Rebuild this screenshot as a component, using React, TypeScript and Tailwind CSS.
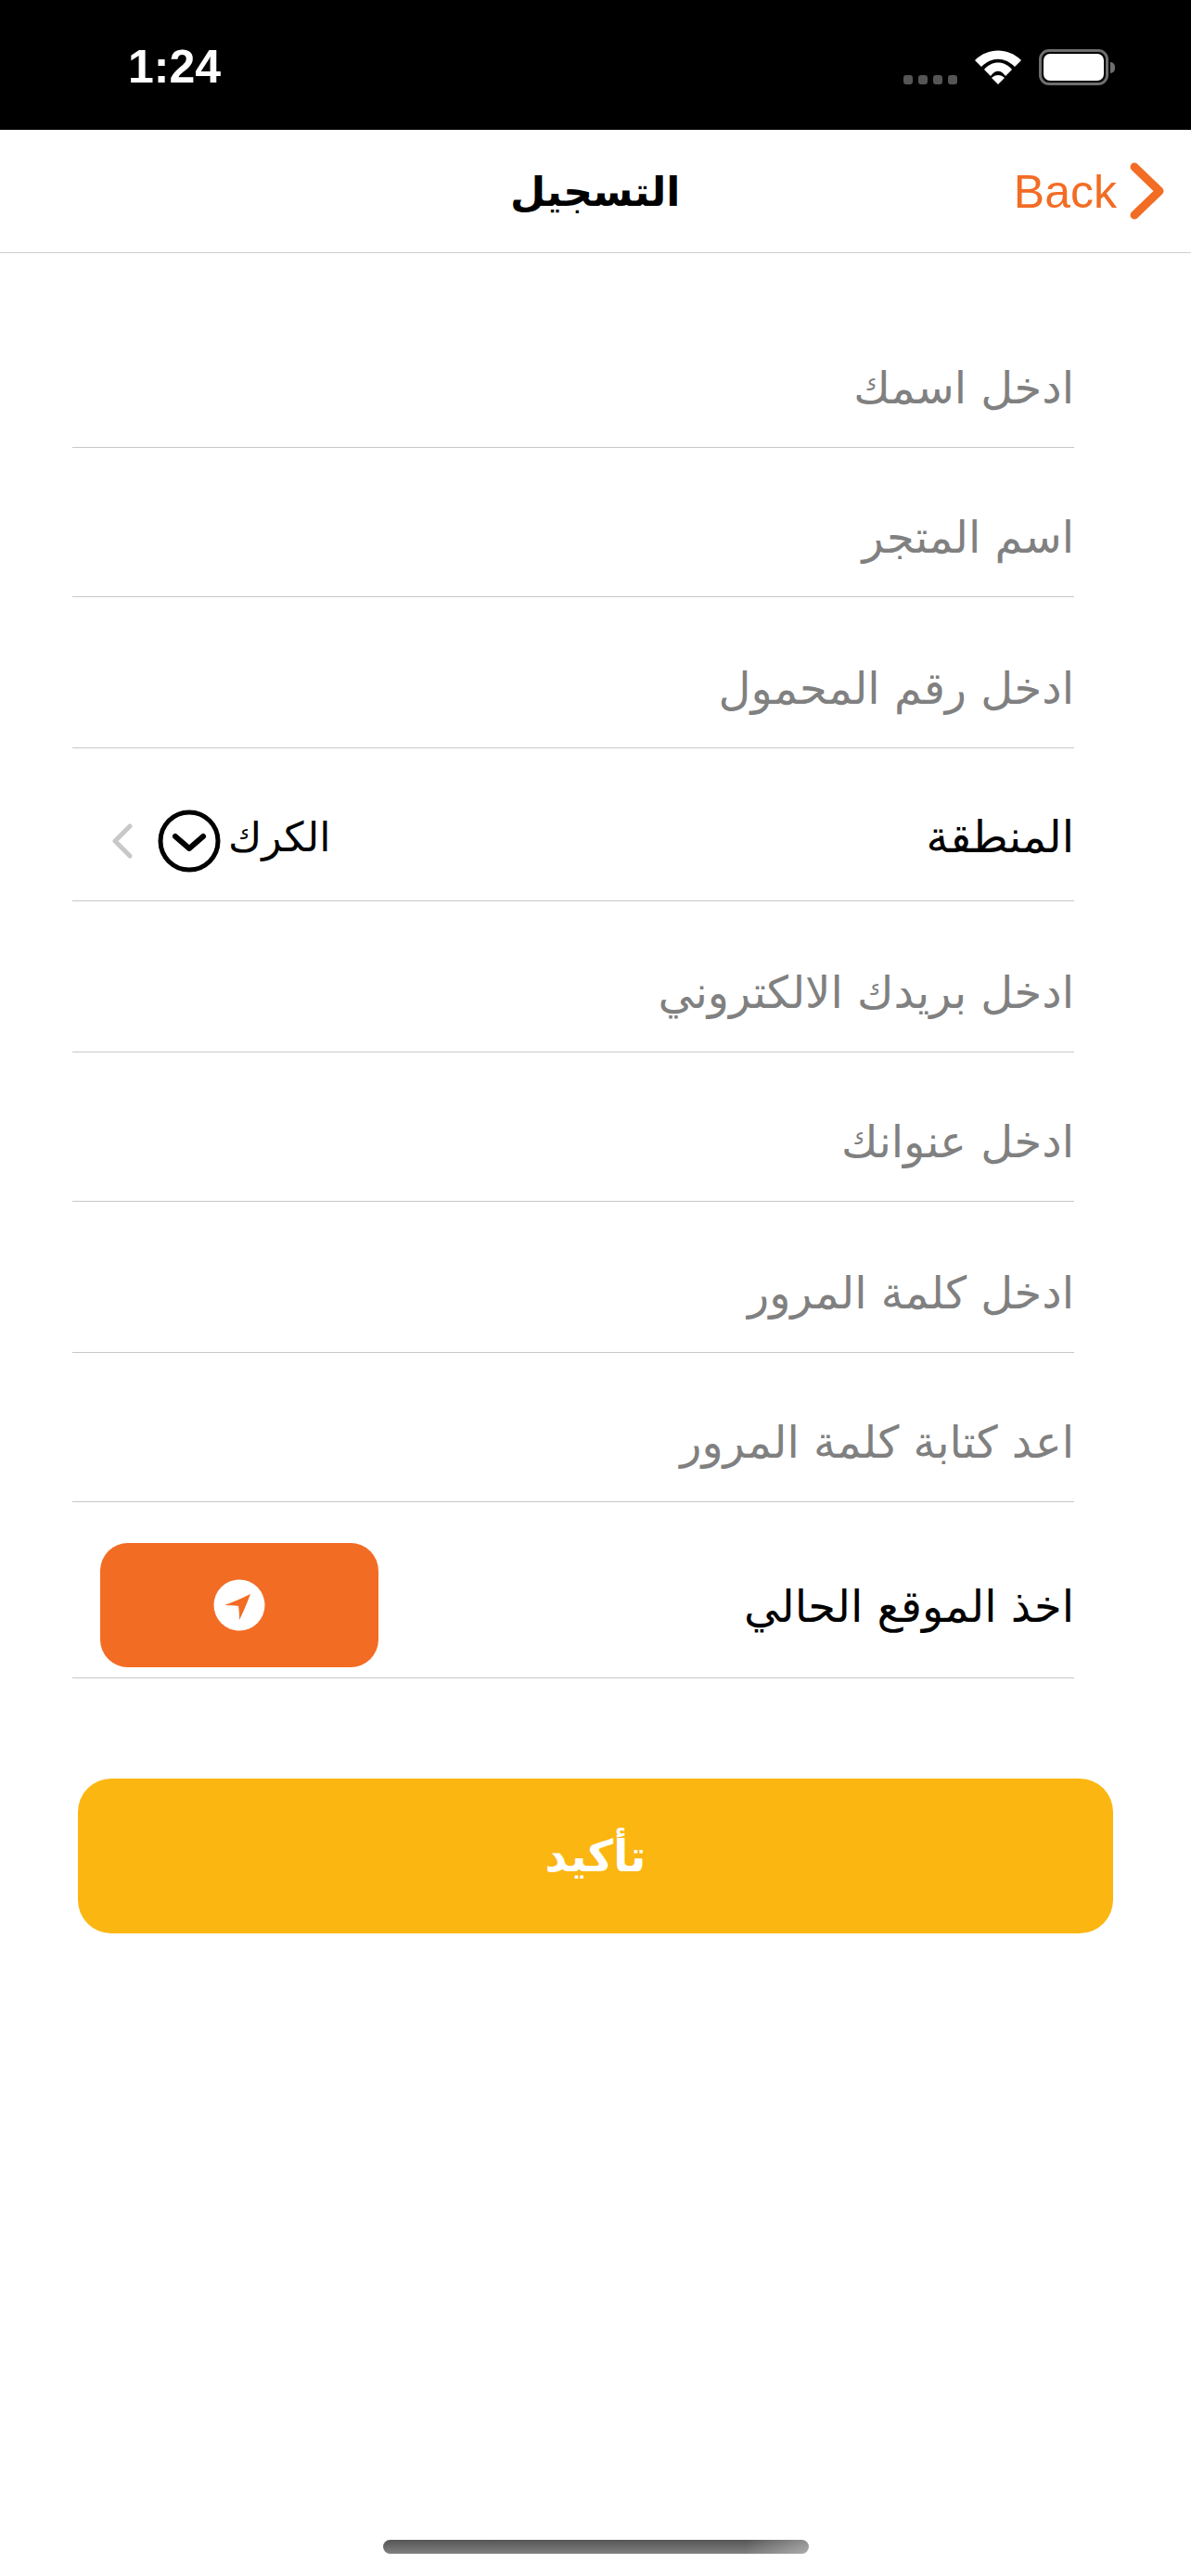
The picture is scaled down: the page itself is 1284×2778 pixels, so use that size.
export default function App() {
  const Row = ({ text, h }: { text: string; h: string }) => (
    <div className={`flex items-end justify-end border-b border-[#c8c8c8] pb-[28px] ${h}`}>
      <span dir="rtl" className="text-[48px] leading-[72px] text-[#808080]">{text}</span>
    </div>
  );
  return (
    <div className="flex h-[2778px] w-[1284px] flex-col overflow-hidden bg-white text-black [font-family:'DejaVu_Sans',sans-serif]">
      <div className="flex h-[140px] items-start justify-between bg-black pl-[138px] pr-[82px] pt-[43px]">
        <span className="text-[50px] font-bold leading-[58px] text-white [font-family:'Liberation_Sans',sans-serif]">1:24</span>
        <div className="flex items-start gap-[19px] pt-[10px]">
          <div className="flex gap-[6px] pt-[28px]">
            {[0, 1, 2, 3].map((i) => (
              <div key={i} className="h-[10px] w-[10px] rounded-[3px] bg-[#555]" />
            ))}
          </div>
          <svg className="mt-[1px]" width="50" height="37" viewBox="0 0 50 37" fill="white">
            <path d="M0 11 C14 -3 36 -3 50 11 L43 18 C32 7 18 7 7 18 Z" />
            <path d="M10 21 C18 11 32 11 40 21 L33 28 C28 21 22 21 17 28 Z" />
            <path d="M18 30 C22 26 28 26 32 30 L25 37 Z" />
          </svg>
          <div className="flex items-center">
            <div className="h-[39px] w-[75px] rounded-[11px] border-[3px] border-[#6e6e6e] p-[2px]">
              <div className="h-full w-full rounded-[7px] bg-white" />
            </div>
            <div className="ml-[2px] h-[12px] w-[5px] rounded-r-full bg-[#6e6e6e]" />
          </div>
        </div>
      </div>

      <div className="relative flex h-[133px] items-center justify-end border-b border-[#cfcfcf] pr-[28px]">
        <span dir="rtl" className="absolute left-[550px] top-[34px] text-[44px] font-bold leading-[66px]">التسجيل</span>
        <span className="mr-[14px] mt-[2px] text-[50px] leading-[56px] text-[#f26c24] [font-family:'Liberation_Sans',sans-serif]">Back</span>
        <svg width="38" height="62" viewBox="0 0 38 62" fill="none" stroke="#f26c24" strokeWidth="9" strokeLinecap="round" strokeLinejoin="round">
          <path d="M5 5 L32 31 L5 57" />
        </svg>
      </div>

      <div className="ml-[78px] mr-[126px] flex flex-col">
        <Row text="ادخل اسمك" h="h-[210px]" />
        <Row text="اسم المتجر" h="h-[161px]" />
        <Row text="ادخل رقم المحمول" h="h-[163px]" />
        <div className="flex h-[165px] items-center justify-between border-b border-[#c8c8c8] pl-[43px] pt-[26px]">
          <div className="flex items-center">
            <svg className="mt-[10px]" width="22" height="38" viewBox="0 0 22 38" fill="none" stroke="#c8c8c8" strokeWidth="5" strokeLinecap="round" strokeLinejoin="round">
              <path d="M19 3 L3 19 L19 35" />
            </svg>
            <svg className="ml-[27px] mt-[10px]" width="68" height="68" viewBox="0 0 68 68" fill="none" stroke="black" strokeWidth="5" strokeLinecap="round" strokeLinejoin="round">
              <circle cx="34" cy="34" r="31" />
              <path d="M19 29 L34 42 L49 29" strokeWidth="6" />
            </svg>
            <span dir="rtl" className="ml-[8px] mt-[2px] text-[44px] leading-[66px]">الكرك</span>
          </div>
          <span dir="rtl" className="text-[48px] leading-[72px]">المنطقة</span>
        </div>
        <Row text="ادخل بريدك الالكتروني" h="h-[163px]" />
        <Row text="ادخل عنوانك" h="h-[161px]" />
        <Row text="ادخل كلمة المرور" h="h-[163px]" />
        <Row text="اعد كتابة كلمة المرور" h="h-[161px]" />
        <div className="flex h-[190px] items-end justify-between border-b border-[#c8c8c8] pb-[11px] pl-[30px]">
          <div className="flex h-[134px] w-[300px] items-center justify-center rounded-[30px] bg-[#f36c24]">
            <svg width="56" height="56" viewBox="0 0 56 56">
              <circle cx="28" cy="28" r="27.5" fill="white" />
              <path d="M12 28 Q24 24 40 16 Q34 32 28 44 Q28 34 27 29 Q20 28 12 28 Z" fill="#f36c24" />
            </svg>
          </div>
          <span dir="rtl" className="mb-[30px] text-[48px] leading-[72px]">اخذ الموقع الحالي</span>
        </div>
      </div>

      <div className="ml-[84px] mt-[108px] flex h-[167px] w-[1116px] items-center justify-center rounded-[36px] bg-[#fbb612]">
        <span dir="rtl" className="text-[47px] font-bold leading-[72px] text-white">تأكيد</span>
      </div>

      <div className="mb-[24px] ml-[413px] mt-auto h-[15px] w-[459px] rounded-full bg-[linear-gradient(90deg,transparent_85%,rgba(255,255,255,0.35)),linear-gradient(180deg,#555,#808080)]" />
    </div>
  );
}
